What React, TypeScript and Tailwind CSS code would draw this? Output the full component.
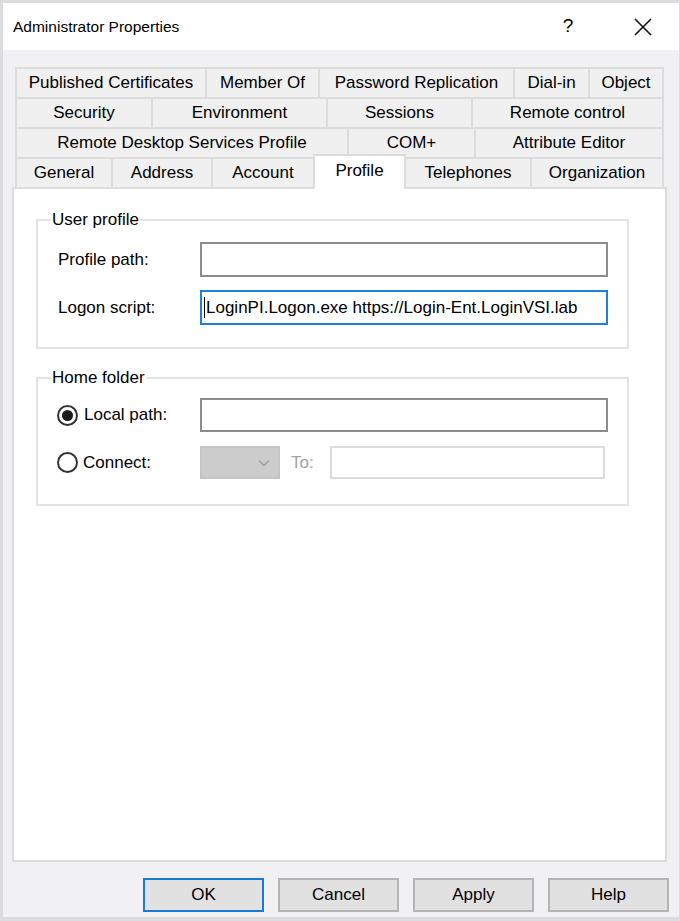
import React from 'react';

type TabDef = { label: string; w: string; active?: boolean };

const rows: TabDef[][] = [
  [
    { label: 'Published Certificates', w: 'w-[192px]' },
    { label: 'Member Of', w: 'w-[113px]' },
    { label: 'Password Replication', w: 'w-[195px]' },
    { label: 'Dial-in', w: 'w-[75px]' },
    { label: 'Object', w: 'w-[74px]' },
  ],
  [
    { label: 'Security', w: 'w-[138px]' },
    { label: 'Environment', w: 'w-[175px]' },
    { label: 'Sessions', w: 'w-[145px]' },
    { label: 'Remote control', w: 'w-[191px]' },
  ],
  [
    { label: 'Remote Desktop Services Profile', w: 'w-[334px]' },
    { label: 'COM+', w: 'w-[127px]' },
    { label: 'Attribute Editor', w: 'w-[188px]' },
  ],
];

const lastRow: TabDef[] = [
  { label: 'General', w: 'w-[98px]' },
  { label: 'Address', w: 'w-[100px]' },
  { label: 'Account', w: 'w-[102px]' },
  { label: 'Profile', w: 'w-[93px]', active: true },
  { label: 'Telephones', w: 'w-[126px]' },
  { label: 'Organization', w: 'w-[132px]' },
];

const Radio = ({ checked }: { checked?: boolean }) => (
  <span className="w-[21px] h-[21px] rounded-full border-2 border-[#333] bg-white flex items-center justify-center shrink-0">
    {checked && <span className="w-[11px] h-[11px] rounded-full bg-[#1a1a1a]" />}
  </span>
);

const Button = ({ label, primary }: { label: string; primary?: boolean }) => (
  <button
    className={
      'w-[121px] h-[34px] bg-[#e1e1e1] border-2 text-[17px] text-black flex items-center justify-center ' +
      (primary ? 'border-[#1a7ad4]' : 'border-[#b4b4b4]')
    }
  >
    {label}
  </button>
);

const App: React.FC = () => {
  return (
    <div className="w-[680px] h-[921px] bg-[#dcdcdf] pt-[3px] pl-[3px] pr-[1px] pb-[4px] font-['Liberation_Sans',Arial,sans-serif] text-black">
      <div className="h-full flex flex-col bg-[#f1f0f3]">
        {/* title bar */}
        <div className="h-[47px] bg-white flex items-center pl-[10px] pr-[26px] shrink-0">
          <span className="text-[15.5px] flex-1">Administrator Properties</span>
          <span className="text-[19px] w-[12px] text-center">?</span>
          <svg className="ml-[59px]" width="20" height="20" viewBox="0 0 20 20">
            <path d="M2 2 L18 18 M18 2 L2 18" stroke="#111" strokeWidth="1.6" fill="none" />
          </svg>
        </div>

        <div className="flex-1 pt-[17px] pl-[9px] flex flex-col">
          {/* tabs */}
          <div className="ml-[3px] w-[649px] text-[17px]">
            {rows.map((row, i) => (
              <div key={i} className="flex h-[30px]">
                {row.map((t) => (
                  <div
                    key={t.label}
                    className={`${t.w} h-full flex items-center justify-center bg-[#f0f0f0] border-t-2 border-r-2 border-[#dcdcdc] first:border-l-2`}
                  >
                    {t.label}
                  </div>
                ))}
              </div>
            ))}
            <div className="flex h-[30px] items-start">
              {lastRow.map((t) =>
                t.active ? (
                  <div
                    key={t.label}
                    className={`${t.w} -ml-[2px] -mt-[3px] h-[35px] pb-[3px] relative z-10 bg-white border-t-2 border-x-2 border-[#dcdcdc] flex items-center justify-center`}
                  >
                    {t.label}
                  </div>
                ) : (
                  <div
                    key={t.label}
                    className={`${t.w} h-[30px] flex items-center justify-center bg-[#f0f0f0] border-t-2 border-r-2 border-[#dcdcdc] first:border-l-2`}
                  >
                    {t.label}
                  </div>
                )
              )}
            </div>
          </div>

          {/* panel */}
          <div className="w-[655px] h-[675px] bg-white border-2 border-[#dcdcdc] pt-[21px] pl-[22px] text-[17px]">
            <fieldset className="w-[593px] border-2 border-[#e3e3e3] pb-[22px]">
              <legend className="ml-[13px] px-[1px] leading-[20px]">User profile</legend>
              <div className="grid grid-cols-[142px_408px] gap-y-[13px] pl-[20px] pt-[12px] items-center">
                <span>Profile path:</span>
                <div className="h-[35px] border-2 border-[#8c8c8c] bg-white" />
                <span>Logon script:</span>
                <div className="h-[35px] border-2 border-[#1f80d8] bg-white flex items-center pl-[2px] whitespace-nowrap overflow-hidden">
                  <span className="w-[1px] h-[21px] bg-black" />
                  <span className="ml-[1px]">LoginPI.Logon.exe https://Login-Ent.LoginVSI.lab</span>
                </div>
              </div>
            </fieldset>

            <fieldset className="w-[593px] border-2 border-[#e3e3e3] pb-[25px] mt-[19px]">
              <legend className="ml-[13px] px-[1px] leading-[20px]">Home folder</legend>
              <div className="grid grid-cols-[142px_408px] gap-y-[14px] pl-[20px] pt-[10px] items-center">
                <div className="flex items-center gap-[6px] -ml-[1px]">
                  <Radio checked />
                  <span>Local path:</span>
                </div>
                <div className="h-[34px] border-2 border-[#8c8c8c] bg-white" />
                <div className="flex items-center gap-[5px] -ml-[1px]">
                  <Radio />
                  <span>Connect:</span>
                </div>
                <div className="flex items-center h-[33px]">
                  <div className="w-[80px] h-full bg-[#cccccc] border-2 border-[#c4c4c4] flex items-center justify-end pr-[8px]">
                    <svg width="12" height="8" viewBox="0 0 12 8">
                      <path d="M1 1.5 L6 6.5 L11 1.5" stroke="#9c9c9c" strokeWidth="1.4" fill="none" />
                    </svg>
                  </div>
                  <span className="ml-[11px] text-[#a2a2a2]">To:</span>
                  <div className="ml-[16px] w-[275px] h-full border-2 border-[#dcdcdc] bg-white" />
                </div>
              </div>
            </fieldset>
          </div>

          {/* buttons */}
          <div className="flex justify-end gap-[14px] mt-[16px] pr-[10px]">
            <Button label="OK" primary />
            <Button label="Cancel" />
            <Button label="Apply" />
            <Button label="Help" />
          </div>
        </div>
      </div>
    </div>
  );
};

export default App;
